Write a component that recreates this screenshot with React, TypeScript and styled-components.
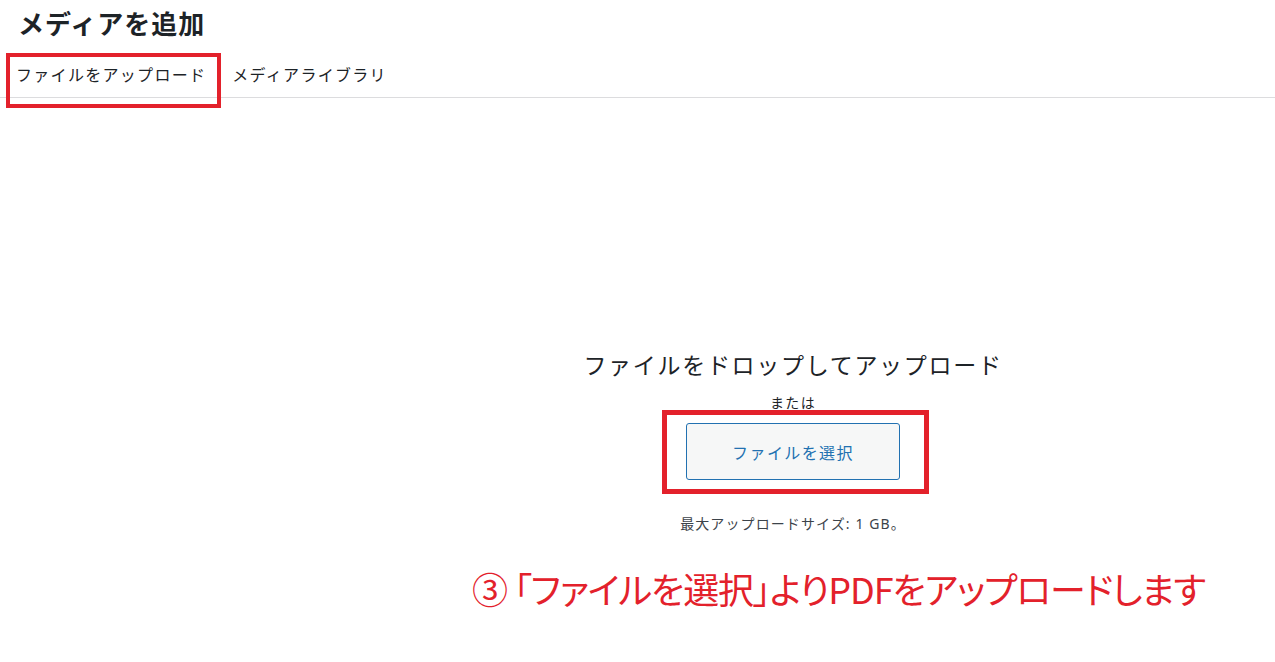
import React from "react";
import styled, { createGlobalStyle } from "styled-components";

const GlobalStyle = createGlobalStyle`
  body {
    margin: 0;
    background: #fff;
    font-family: "Noto Sans", "Noto Sans CJK JP", sans-serif;
    color: #1d2327;
  }
`;

const Page = styled.div`
  width: 1275px;
  height: 662px;
  overflow: hidden;
`;

const Title = styled.h1`
  margin: 0;
  height: 50px;
  padding: 8px 0 0 18px;
  box-sizing: border-box;
  font-size: 26px;
  line-height: 32px;
  font-weight: 700;
  letter-spacing: 1px;
`;

const Tabs = styled.nav`
  display: flex;
  padding-left: 3px;
  border-bottom: 1px solid #dcdcde;
`;

const Tab = styled.div<{ $highlight?: boolean }>`
  position: relative;
  padding: 15px 13px 12px;
  font-size: 16px;
  line-height: 20px;
  letter-spacing: 1.3px;
  color: #1d2327;
  cursor: pointer;

  ${({ $highlight }) =>
    $highlight &&
    `
    &::after {
      content: "";
      position: absolute;
      top: 3px;
      left: 3px;
      right: -2px;
      bottom: -11px;
      border: 4px solid #e3212b;
    }
  `}
`;

const Uploader = styled.section`
  display: flex;
  flex-direction: column;
  align-items: center;
  padding: 252px 0 0 311px;
`;

const DropTitle = styled.h2`
  margin: 0;
  font-size: 23px;
  line-height: 30px;
  font-weight: 400;
  letter-spacing: 1.7px;
  color: #1d2327;
`;

const Or = styled.p`
  margin: 13px 0 0;
  font-size: 14px;
  line-height: 20px;
  letter-spacing: 1.3px;
  color: #1d2327;
`;

const Highlight = styled.div`
  position: relative;
  margin-top: 10px;

  &::after {
    content: "";
    position: absolute;
    top: -13px;
    left: -24px;
    right: -29px;
    bottom: -14px;
    border: 5px solid #e3212b;
    pointer-events: none;
  }
`;

const SelectButton = styled.button`
  display: block;
  width: 214px;
  height: 57px;
  border: 1px solid #2271b1;
  border-radius: 3px;
  background: #f6f7f7;
  color: #2271b1;
  font-family: "Noto Sans", "Noto Sans CJK JP", sans-serif;
  font-size: 16px;
  letter-spacing: 1.4px;
  cursor: pointer;
`;

const MaxSize = styled.p`
  margin: 34px 0 0;
  font-size: 14px;
  line-height: 20px;
  letter-spacing: 1.1px;
  color: #3c434a;
`;

const Note = styled.p`
  margin: 32px 0 0 472px;
  font-family: "Noto Sans CJK JP", sans-serif;
  font-size: 36px;
  line-height: 44px;
  font-feature-settings: "palt";
  letter-spacing: -1.1px;
  color: #e3212b;
  white-space: nowrap;
`;

const App: React.FC = (): JSX.Element => (
  <Page>
    <GlobalStyle />
    <Title>メディアを追加</Title>
    <Tabs>
      <Tab $highlight>ファイルをアップロード</Tab>
      <Tab>メディアライブラリ</Tab>
    </Tabs>
    <Uploader>
      <DropTitle>ファイルをドロップしてアップロード</DropTitle>
      <Or>または</Or>
      <Highlight>
        <SelectButton>ファイルを選択</SelectButton>
      </Highlight>
      <MaxSize>最大アップロードサイズ: 1 GB。</MaxSize>
    </Uploader>
    <Note>③ 「ファイルを選択」よりPDFをアップロードします</Note>
  </Page>
);

export default App;
